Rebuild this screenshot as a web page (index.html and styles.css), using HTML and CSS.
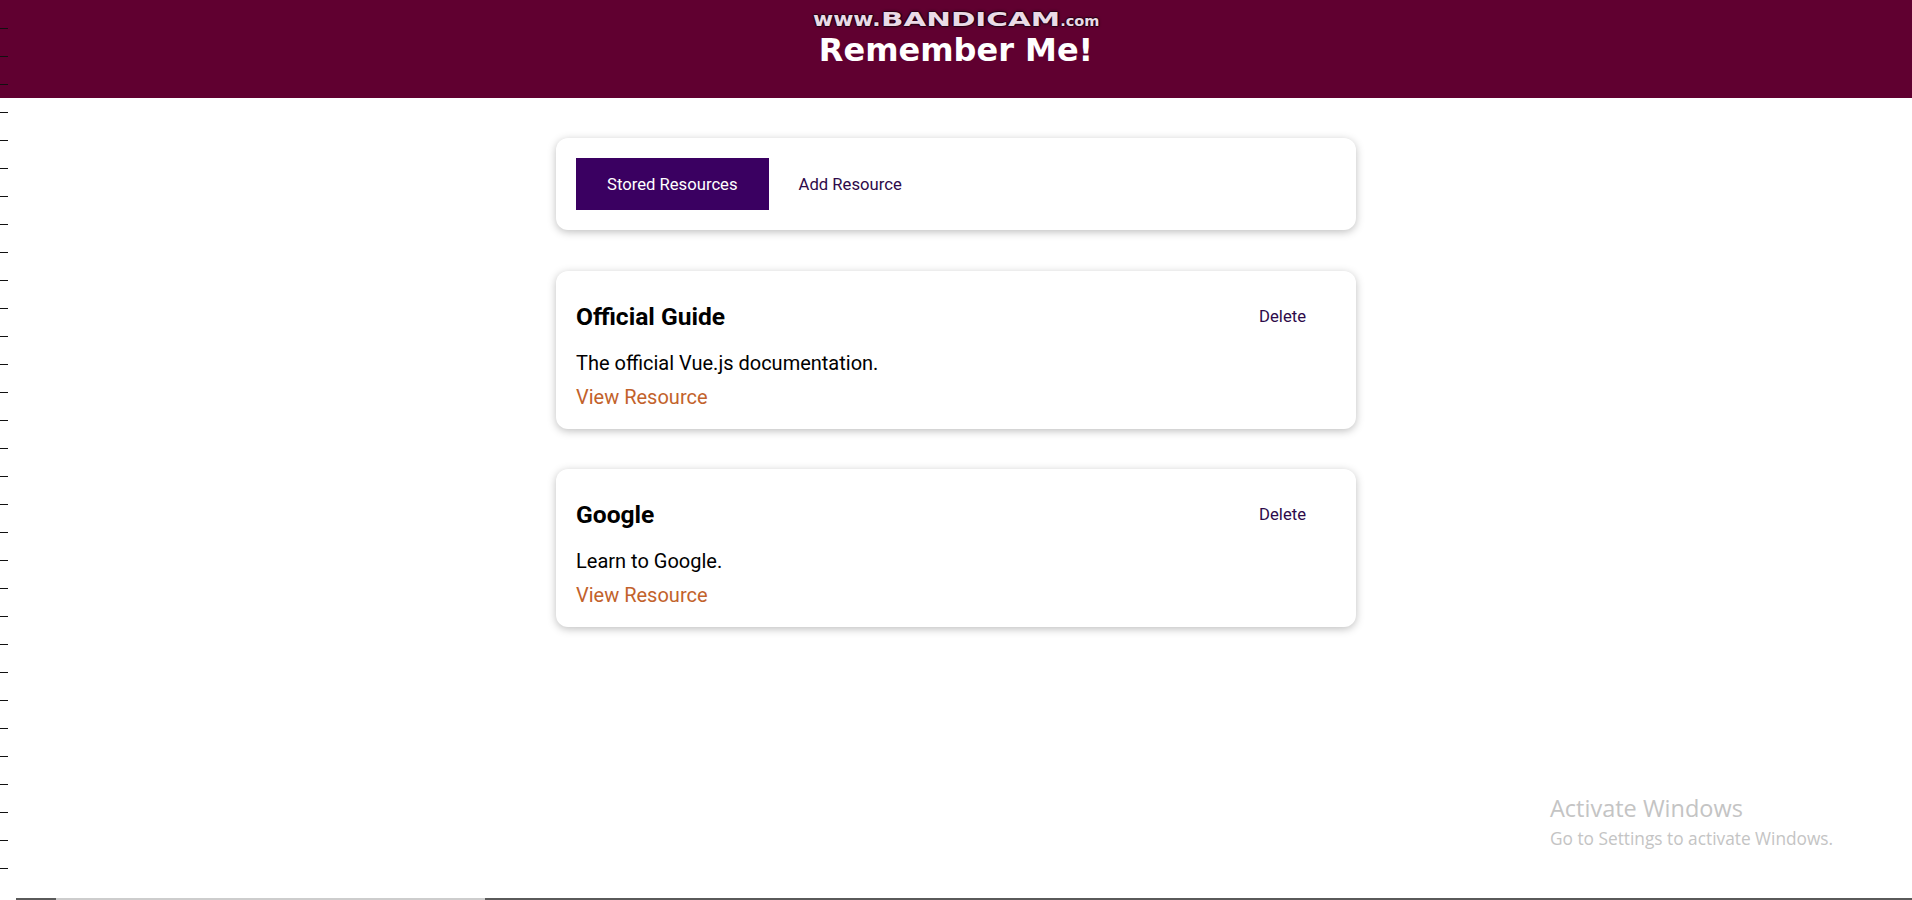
FILE: index.html
```html
<!DOCTYPE html>
<html lang="en">
<head>
<meta charset="utf-8">
<title>Remember Me!</title>
<link rel="stylesheet" href="styles.css">
</head>
<body>
  <header class="app-header">
    <h1 class="app-title">Remember Me!</h1>
  </header>

  <main class="resources">
    <section class="card tabs">
      <button class="tab tab-active">Stored Resources</button>
      <button class="tab tab-flat">Add Resource</button>
    </section>

    <ul class="resource-list">
      <li class="card resource">
        <div class="resource-head">
          <h3 class="resource-title">Official Guide</h3>
          <button class="flat-btn">Delete</button>
        </div>
        <p class="resource-desc">The official Vue.js documentation.</p>
        <nav class="resource-nav"><a class="resource-link" href="#">View Resource</a></nav>
      </li>
      <li class="card resource">
        <div class="resource-head">
          <h3 class="resource-title">Google</h3>
          <button class="flat-btn">Delete</button>
        </div>
        <p class="resource-desc">Learn to Google.</p>
        <nav class="resource-nav"><a class="resource-link" href="#">View Resource</a></nav>
      </li>
    </ul>
  </main>

  <div class="rec-mark"><span class="rm-www">www.</span><span class="rm-brand">BANDICAM</span><span class="rm-com">.com</span></div>
  <div class="ruler"></div>
  <div class="activate">
    <div class="act-title">Activate Windows</div>
    <div class="act-sub">Go to Settings to activate Windows.</div>
  </div>
  <div class="scrollbar"></div>
</body>
</html>
```

FILE: styles.css
```css
* {
  box-sizing: border-box;
}

html,
body {
  margin: 0;
  padding: 0;
}

body {
  position: relative;
  width: 1912px;
  height: 900px;
  overflow: hidden;
  background: #ffffff;
  font-family: Roboto, "Liberation Sans", Arial, sans-serif;
  color: #000;
}

/* Header */
.app-header {
  height: 98px;
  padding-top: 2px;
  background: #600030;
  display: flex;
  align-items: center;
  justify-content: center;
}

.app-title {
  margin: 0;
  color: #ffffff;
  font-family: "DejaVu Sans", Verdana, sans-serif;
  font-size: 32px;
  font-weight: 700;
  line-height: 30px;
}

/* Main column */
.resources {
  width: 800px;
  margin: 40px auto 0;
}

.card {
  background: #ffffff;
  border-radius: 12px;
  box-shadow: 0 2px 8px rgba(0, 0, 0, 0.26);
  padding: 20px;
}

.tabs {
  display: flex;
}

.tab {
  margin: 0;
  font-family: inherit;
  font-size: 16.67px;
  line-height: 20px;
  padding: 16px 30px 14px;
  border: 1px solid #3a0061;
  background: transparent;
  color: #2e0a4a;
  cursor: pointer;
}

.tab-active {
  background: #3a0061;
  color: #ffffff;
}

.tab-flat {
  border: none;
}

.resource-list {
  list-style: none;
  margin: 41px 0 0;
  padding: 0;
  display: flex;
  flex-direction: column;
  gap: 40px;
}

.resource-head {
  display: flex;
  justify-content: space-between;
  align-items: center;
  padding-top: 1px;
}

.resource-title {
  margin: 0 0 2px;
  font-size: 24.6px;
  font-weight: 700;
  line-height: normal;
  color: #000;
}

.flat-btn {
  margin: 0;
  font-family: inherit;
  font-size: 16.67px;
  line-height: 20px;
  padding: 15px 30px;
  border: none;
  background: transparent;
  color: #2e0a4a;
  cursor: pointer;
}

.resource-desc {
  margin: 9px 0 10px;
  font-size: 20px;
  line-height: normal;
  color: #000;
}

.resource-nav {
  font-size: 20px;
  line-height: normal;
}

.resource-link {
  color: #c2622b;
  text-decoration: none;
}

/* Screen-recorder watermark overlay */
.rec-mark {
  position: absolute;
  left: 813px;
  top: 11px;
  height: 17px;
  font-family: "DejaVu Sans", Verdana, sans-serif;
  font-weight: 700;
  font-size: 19px;
  line-height: 16px;
  color: #eadbe6;
  white-space: nowrap;
  text-shadow:
    1px 0 0 #2a0016,
    -1px 0 0 #2a0016,
    0 1px 0 #2a0016,
    0 -1px 0 #2a0016,
    0 0 3px #1a000d;
}

.rm-www {
  display: inline-block;
  transform: scaleX(1.15);
  transform-origin: left center;
  margin-right: 9px;
}

.rm-brand {
  display: inline-block;
  transform: scaleX(1.55);
  transform-origin: left center;
  margin-right: 64px;
}

.rm-com {
  font-size: 14.5px;
}

/* Left-edge tick marks overlay */
.ruler {
  position: absolute;
  left: 0;
  top: 28px;
  width: 8px;
  height: 845px;
  background: repeating-linear-gradient(
    to bottom,
    #111 0,
    #111 1px,
    transparent 1px,
    transparent 28px
  );
}

/* OS activation watermark overlay */
.activate {
  position: absolute;
  left: 1550px;
  top: 792px;
  font-family: "Open Sans", "Noto Sans", sans-serif;
  color: #c4c4c4;
}

.act-title {
  font-size: 23.5px;
  line-height: normal;
}

.act-sub {
  margin-top: 3px;
  font-size: 17.3px;
  line-height: normal;
}

/* Bottom scrollbar strip */
.scrollbar {
  position: absolute;
  left: 0;
  bottom: 0;
  width: 100%;
  height: 2px;
  background: linear-gradient(
    to right,
    #ffffff 0,
    #ffffff 16px,
    #5a5a5a 16px,
    #5a5a5a 56px,
    #cdcdcd 56px,
    #cdcdcd 485px,
    #5a5a5a 485px
  );
}
```
